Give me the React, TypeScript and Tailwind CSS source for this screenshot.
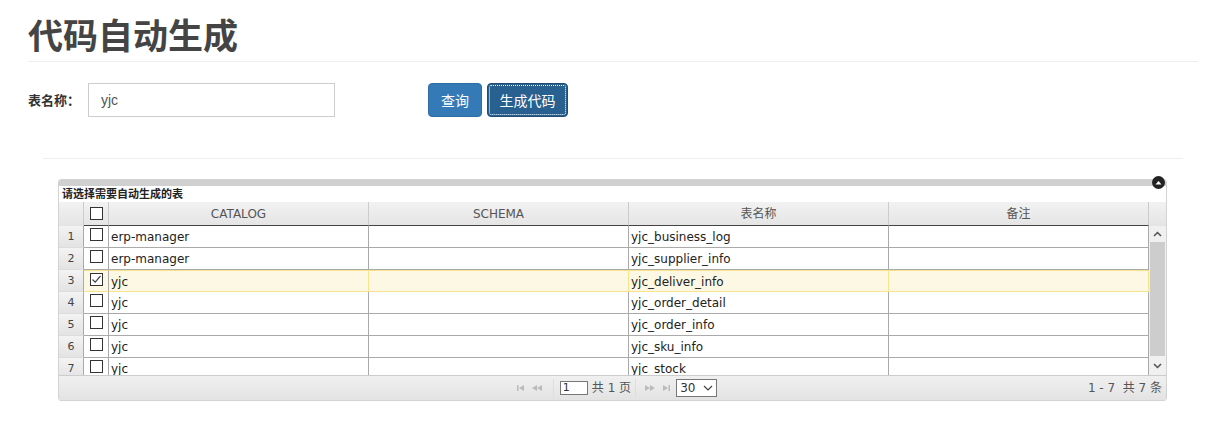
import React from "react";

const rows = [
  { n: 1, cat: "erp-manager", name: "yjc_business_log" },
  { n: 2, cat: "erp-manager", name: "yjc_supplier_info" },
  { n: 3, cat: "yjc", name: "yjc_deliver_info", sel: true },
  { n: 4, cat: "yjc", name: "yjc_order_detail" },
  { n: 5, cat: "yjc", name: "yjc_order_info" },
  { n: 6, cat: "yjc", name: "yjc_sku_info" },
  { n: 7, cat: "yjc", name: "yjc_stock" },
];

const cjk = "font-['Noto_Sans_CJK_SC',sans-serif]";
const gridFont = "font-['DejaVu_Sans','Noto_Sans_CJK_SC',sans-serif]";

function Box({ checked }: { checked?: boolean }) {
  return (
    <div className="w-[13px] h-[13px] border border-[#333] bg-white flex items-center justify-center">
      {checked && (
        <svg width="11" height="11" viewBox="0 0 11 11">
          <path d="M1.5 5.5 L4.2 8.2 L9.5 2" fill="none" stroke="#444" strokeWidth="1.2" />
        </svg>
      )}
    </div>
  );
}

export default function App() {
  return (
    <div className={`w-[1224px] h-[426px] bg-white ${cjk} overflow-hidden`}>
      <div className="pl-[28px] pr-[26px]">
        <h1 className="pt-[12px] h-[62px] text-[35px] leading-[44px] font-bold text-[#444] tracking-[0px] border-b border-[#eee]">
          代码自动生成
        </h1>
        <div className="flex items-center mt-[21px] h-[34px]">
          <span className="text-[13px] font-bold text-[#333] w-[60px]">表名称：</span>
          <div className="w-[247px] h-[34px] border border-[#ccc] flex items-center pl-[12px] text-[14px] text-[#555] font-['Liberation_Sans',sans-serif]">
            yjc
          </div>
          <button className="ml-[93px] w-[54px] h-[34px] rounded-[4px] bg-[#337ab7] border border-[#2e6da4] text-white text-[14px]">
            查询
          </button>
          <button className="ml-[5px] w-[81px] h-[34px] rounded-[4px] bg-[#286090] border border-[#204d74] text-white text-[14px] outline-1 outline-dotted outline-white -outline-offset-[3px]">
            生成代码
          </button>
        </div>
        <div className="mx-[15px] mt-[41px] border-t border-[#eee]" />
        <div className="ml-[30px] w-[1109px] mt-[20px] relative">
          {/* collapse icon */}
          <div className="absolute right-[2px] top-[-3px] w-[13px] h-[13px] rounded-full bg-[#222] flex items-center justify-center">
            <svg width="7" height="5" viewBox="0 0 7 5">
              <path d="M0.5 4.5 L3.5 1 L6.5 4.5 Z" fill="#fff" />
            </svg>
          </div>
          <div className="border border-[#d3d3d3] rounded-[3px] overflow-hidden">
            <div className="h-[6px] bg-[#d0d0d0]" />
            <div className={`h-[16px] bg-white text-[11px] font-bold text-[#222] leading-[14px] pl-[3px] ${cjk}`}>
              请选择需要自动生成的表
            </div>
            {/* header */}
            <div className={`flex h-[24px] bg-gradient-to-b from-[#f2f2f2] to-[#e4e4e4] text-[12px] text-[#555] ${gridFont}`}>
              <div className="w-[25px] border-r border-[#ccc]" />
              <div className="w-[25px] border-r border-[#ccc] border-b border-b-[#444] flex items-center justify-center"><Box /></div>
              <div className="w-[260px] border-r border-[#ccc] border-b border-b-[#444] flex items-center justify-center">CATALOG</div>
              <div className="w-[260px] border-r border-[#ccc] border-b border-b-[#444] flex items-center justify-center">SCHEMA</div>
              <div className="w-[260px] border-r border-[#ccc] border-b border-b-[#444] flex items-center justify-center">表名称</div>
              <div className="w-[260px] border-r border-[#ccc] border-b border-b-[#444] flex items-center justify-center">备注</div>
              <div className="flex-1" />
            </div>
            {/* body */}
            <div className="flex h-[149px] overflow-hidden">
              <div className={`w-[1090px] text-[12px] text-[#222] ${gridFont}`}>
                {rows.map((r) => (
                  <div key={r.n} className={`flex h-[22px] ${r.sel ? "bg-[#fdf8e4]" : "bg-white"}`}>
                    <div className="w-[25px] shrink-0 bg-gradient-to-b from-[#f3f3f3] to-[#e3e3e3] border-r border-b border-[#aaa] border-b-[#ddd] flex items-center justify-center text-[#444] text-[11px] pt-[1px]">
                      {r.n}
                    </div>
                    <div className={`w-[25px] shrink-0 border-r border-b border-[#aaa] ${r.sel ? "border-b-[#f8e28a] border-t border-t-[#f8e28a]" : ""} flex items-start justify-center pt-[2px]`}>
                      <Box checked={r.sel} />
                    </div>
                    <div className={`w-[260px] shrink-0 border-r border-b border-[#aaa] ${r.sel ? "border-b-[#f8e28a] border-r-[#f8e28a] border-t border-t-[#f8e28a]" : ""} pl-[2px] leading-[22px]`}>
                      {r.cat}
                    </div>
                    <div className={`w-[260px] shrink-0 border-r border-b border-[#aaa] ${r.sel ? "border-b-[#f8e28a] border-r-[#f8e28a] border-t border-t-[#f8e28a]" : ""}`} />
                    <div className={`w-[260px] shrink-0 border-r border-b border-[#aaa] ${r.sel ? "border-b-[#f8e28a] border-r-[#f8e28a] border-t border-t-[#f8e28a]" : ""} pl-[2px] leading-[22px]`}>
                      {r.name}
                    </div>
                    <div className={`w-[260px] shrink-0 border-r border-b border-[#aaa] ${r.sel ? "border-b-[#f8e28a] border-r-[#f8e28a] border-t border-t-[#f8e28a]" : ""}`} />
                  </div>
                ))}
              </div>
              {/* scrollbar */}
              <div className="w-[17px] bg-[#f0f0f0] flex flex-col">
                <div className="h-[16px] flex items-center justify-center">
                  <svg width="9" height="6" viewBox="0 0 9 6"><path d="M1 5 L4.5 1.5 L8 5" fill="none" stroke="#505050" strokeWidth="1.5" /></svg>
                </div>
                <div className="mx-[1px] h-[114px] bg-[#cdcdcd]" />
                <div className="flex-1 flex items-center justify-center">
                  <svg width="9" height="6" viewBox="0 0 9 6"><path d="M1 1 L4.5 4.5 L8 1" fill="none" stroke="#505050" strokeWidth="1.5" /></svg>
                </div>
              </div>
            </div>
            {/* pager */}
            <div className={`relative h-[25px] border-t border-[#ccc] bg-gradient-to-b from-[#f0f0f0] to-[#e3e3e3] flex items-center justify-center text-[12px] text-[#555] ${gridFont}`}>
              <div className="flex items-center gap-[0px] text-[#bbb] ml-[5px]">
                <svg width="16" height="10" viewBox="0 0 16 10"><rect x="4" y="2" width="1.5" height="6" fill="#bbb" /><path d="M11 2 L6 5 L11 8 Z" fill="#bbb" /></svg>
                <svg width="18" height="10" viewBox="0 0 18 10"><path d="M8 2 L3 5 L8 8 Z M13 2 L8 5 L13 8 Z" fill="#bbb" /></svg>
                <div className="w-[1px] h-[18px] bg-[#ddd] mx-[6px]" />
                <div className="w-[28px] h-[14px] border border-[#777] bg-white text-[11px] text-[#333] leading-[12px] pl-[2px] mr-[4px]">1</div>
                <span className={`text-[12px] text-[#555]`}>共 1 页</span>
                <div className="w-[1px] h-[18px] bg-[#ddd] mx-[4px]" />
                <svg width="18" height="10" viewBox="0 0 18 10"><path d="M5 2 L10 5 L5 8 Z M10 2 L15 5 L10 8 Z" fill="#bbb" /></svg>
                <svg width="16" height="10" viewBox="0 0 16 10"><path d="M5 2 L10 5 L5 8 Z" fill="#bbb" /><rect x="10.5" y="2" width="1.5" height="6" fill="#bbb" /></svg>
                <div className="ml-[2px] w-[41px] h-[18px] border border-[#777] bg-white flex items-center justify-between px-[3px] text-[12px] text-[#333]">
                  <span>30</span>
                  <svg width="10" height="6" viewBox="0 0 10 6"><path d="M1 1 L5 5 L9 1" fill="none" stroke="#444" strokeWidth="1.2" /></svg>
                </div>
              </div>
              <div className="absolute right-[4px] top-0 h-full flex items-center text-[12px] text-[#555]">
                1 - 7&nbsp;&nbsp;共 7 条
              </div>
            </div>
          </div>
        </div>
      </div>
    </div>
  );
}
